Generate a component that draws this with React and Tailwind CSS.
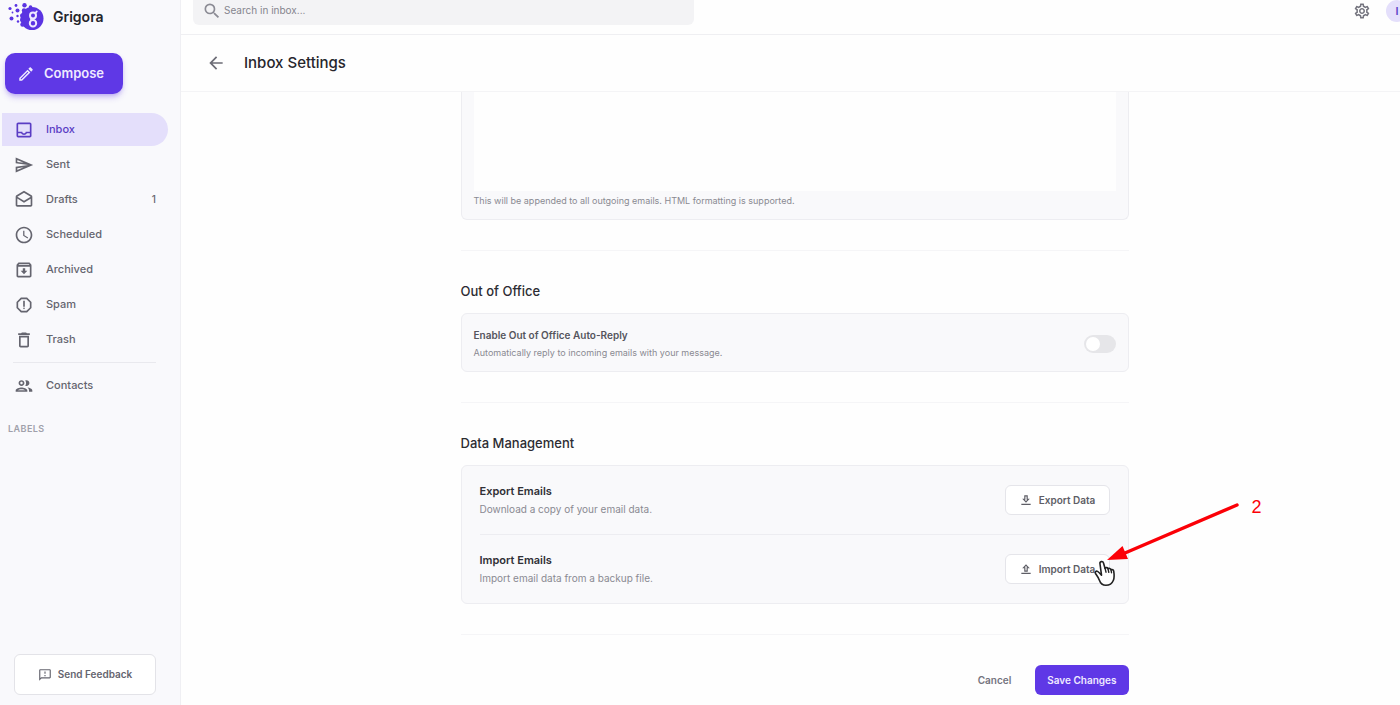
import { useState } from 'react'
import {
  MdArrowBack, MdDeleteOutline, MdOutlineArchive, MdOutlineDrafts, MdOutlineEdit,
  MdOutlineFeedback, MdOutlineGroup, MdOutlineInbox, MdOutlineReport, MdOutlineSend,
  MdOutlineSettings, MdSchedule, MdSearch
} from 'react-icons/md'

const folders = [
  { name: 'Inbox', icon: MdOutlineInbox },
  { name: 'Sent', icon: MdOutlineSend },
  { name: 'Drafts', icon: MdOutlineDrafts, count: 1 },
  { name: 'Scheduled', icon: MdSchedule },
  { name: 'Archived', icon: MdOutlineArchive },
  { name: 'Spam', icon: MdOutlineReport },
  { name: 'Trash', icon: MdDeleteOutline },
]

function Logo() {
  return (
    <svg width="36" height="28" viewBox="0 0 36 28" fill="#5b34e2" aria-hidden="true">
      <circle cx="24" cy="15.5" r="11.5" />
      <circle cx="16.5" cy="2.2" r="2.2" />
      <circle cx="8" cy="2.5" r="1.4" />
      <circle cx="2" cy="5.5" r="1.6" />
      <circle cx="9.5" cy="7.5" r="2" />
      <circle cx="4.5" cy="9.5" r="0.9" />
      <circle cx="16" cy="7.5" r="2.2" />
      <circle cx="22.5" cy="4" r="1.8" />
      <circle cx="3.5" cy="15.5" r="2" />
      <circle cx="9.5" cy="13" r="1.2" />
      <circle cx="14" cy="12.5" r="2" />
      <circle cx="10" cy="18.5" r="1.2" />
      <circle cx="14" cy="17" r="2" />
      <circle cx="14.5" cy="21.5" r="2.2" />
      <g fill="none" stroke="#eee9ff" strokeWidth="2" strokeLinecap="round">
        <circle cx="25" cy="12.5" r="3" />
        <circle cx="25" cy="20.3" r="3.2" />
        <path d="M27.5 10l1.2-1.5M23.5 15.4c-1 1 0 1.6 1.5 1.7" />
      </g>
    </svg>
  )
}

function TransferIcon({ d }) {
  return (
    <svg width="14" height="14" viewBox="0 0 24 24" fill="currentColor" aria-hidden="true">
      <path d={d} />
    </svg>
  )
}

const exportPath = 'M18.5 10H15V4H9v6H5.5l6.5 6.5zM11 11.5V6h2v5.5h1.2L12 13.7 9.8 11.5zM4 18.5h16v2H4z'
const importPath = 'M5.5 10.5H9v6h6v-6h3.5L12 4zM13 9v5.5h-2V9H9.8L12 6.8 14.2 9zM4 18.5h16v2H4z'

function NavItem({ icon: Icon, name, count, active, onClick }) {
  return (
    <button
      onClick={onClick}
      className={`flex h-[33px] w-full items-center rounded-r-full px-3 text-[11px] font-medium ${active ? 'bg-[#e4dffb] text-[#5a3dc4]' : 'text-[#65656f]'}`}
    >
      <Icon size={20} />
      <span className="ml-3">{name}</span>
      {count && <span className="ml-auto text-[10px]">{count}</span>}
    </button>
  )
}

function Sidebar() {
  const [current, setCurrent] = useState('Inbox')
  return (
    <aside className="flex w-[181px] shrink-0 flex-col border-r border-[#efeff3] bg-[#f9f9fc]">
      <div className="flex items-center gap-[9px] pl-2 pt-[3px]">
        <Logo />
        <span className="text-sm font-semibold text-[#24242a]">Grigora</span>
      </div>
      <button className="ml-[5px] mt-[22px] flex h-[41px] w-[118px] items-center gap-[9px] rounded-[10px] bg-[#5f38e6] pl-3 text-[13px] font-semibold text-[#efeaff] shadow-md shadow-[#5f38e6]/30">
        <MdOutlineEdit size={18} />
        Compose
      </button>
      <nav className="mt-[19px] flex flex-col gap-[2px] pl-[2px] pr-3">
        {folders.map(f => (
          <NavItem key={f.name} {...f} active={current === f.name} onClick={() => setCurrent(f.name)} />
        ))}
        <hr className="mt-1 mb-1 ml-[11px] mr-3 border-[#e9e9ee]" />
        <NavItem icon={MdOutlineGroup} name="Contacts" active={current === 'Contacts'} onClick={() => setCurrent('Contacts')} />
      </nav>
      <h2 className="pl-2 pt-5 text-[9px] font-semibold tracking-wider text-[#a0a0aa]">LABELS</h2>
      <div className="mt-auto pr-6 pb-[10px] pl-[14px]">
        <button className="flex h-[41px] w-full items-center justify-center gap-[6px] rounded-md border border-[#e3e3e8] bg-white text-[10px] font-semibold text-[#65656f]">
          <MdOutlineFeedback size={14} />
          Send Feedback
        </button>
      </div>
    </aside>
  )
}

function TopBar() {
  return (
    <header className="flex h-[35px] items-start justify-between border-b border-[#efeff2] pl-3">
      <label className="flex h-[25px] w-[501px] items-center gap-[2px] rounded-b-md bg-[#f3f3f5] pb-1 pl-[9px]">
        <MdSearch size={20} className="shrink-0 text-[#8b8b94]" />
        <input
          type="text"
          aria-label="Search in inbox"
          placeholder="Search in inbox..."
          className="w-full bg-transparent text-[10px] outline-none placeholder:text-[#85858e]"
        />
      </label>
      <div className="flex items-center overflow-hidden">
        <button aria-label="Settings" className="mr-[15px] text-[#74747e]">
          <MdOutlineSettings size={18} />
        </button>
        <button className="-mr-2 h-[22px] w-[22px] rounded-full bg-[#e4dffb] text-[11px] font-semibold text-[#5f45c8]">I</button>
      </div>
    </header>
  )
}

function DataRow({ title, text, children }) {
  return (
    <div className="flex items-center justify-between py-4">
      <div>
        <h3 className="text-[11px] leading-[18px] font-semibold text-[#303036]">{title}</h3>
        <p className="text-[10px] leading-[18px] text-[#8a8a92]">{text}</p>
      </div>
      {children}
    </div>
  )
}

const dataButton = 'flex h-[30px] w-[105px] items-center justify-center gap-[6px] rounded-md border border-[#e5e5ea] bg-white text-[10px] font-semibold text-[#5e5e66]'

// red arrow with its step number, plus the hand cursor over the button
function Pointer() {
  return (
    <div className="pointer-events-none absolute -top-[55px] left-[88px] h-[90px] w-[180px]">
      <svg width="180" height="90" viewBox="0 0 180 90" className="absolute inset-0" aria-hidden="true">
        <path d="M144 6L32 54" stroke="#fb0007" strokeWidth="3.4" strokeLinecap="round" />
        <path d="M14 61L29.5 47L35 60Z" fill="#fb0007" />
        <path
          d="M7 65c-.6-2.6 2.8-3.4 3.5-1l1.5 5.2c1-1 2.8-.7 3 .6c1-.8 2.7-.4 3 .9c1.2-.6 2.5.1 2.7 1.5c.5 3 .8 6.5-.3 9c-1.5 3.7-4 5-7.5 5c-3.5 0-5.5-2-6.5-5c-.8-2.3-2.3-4.3-3.8-6.5c-1-1.5.3-3.2 2-2.3c1.3.7 2.4 2 3.9 3.8z"
          fill="#fff" stroke="#222" strokeWidth="1.6" strokeLinejoin="round"
        />
        <path d="M12 69.2l1 4M15 69.8l.8 3.6M18 70.7l.5 3" stroke="#222" strokeWidth="1.4" strokeLinecap="round" />
      </svg>
      <span className="absolute top-0 left-[159px] font-['Liberation_Sans',sans-serif] text-lg leading-4 text-[#fb0007]">2</span>
    </div>
  )
}

export default function App() {
  const [signature, setSignature] = useState('')
  const [autoReply, setAutoReply] = useState(false)

  return (
    <div className="flex min-h-screen bg-[#fefefe] font-['Inter',sans-serif]">
      <Sidebar />
      <main className="min-w-0 flex-1">
        <TopBar />
        <div className="flex h-[57px] items-center gap-[18px] border-b border-[#f4f4f6] pl-[25px]">
          <button aria-label="Back" className="text-[#6c6c76]">
            <MdArrowBack size={20} />
          </button>
          <h1 className="text-[15px] font-medium text-[#26262c]">Inbox Settings</h1>
        </div>

        <div className="pl-2">
          <div className="mx-auto max-w-[668px]">
            <section className="rounded-b-md border border-t-0 border-[#ededf1] bg-[#f9f9fb] px-3 pb-[9px]">
              <textarea
                id="signature"
                aria-label="Signature"
                value={signature}
                onChange={e => setSignature(e.target.value)}
                className="block h-[99px] w-full resize-none bg-[#fefefe] outline-none"
              />
              <p className="pt-[1px] text-[9px] leading-[18px] text-[#8a8a92]">
                This will be appended to all outgoing emails. HTML formatting is supported.
              </p>
            </section>

            <hr className="my-[30px] border-[#f5f5f7]" />

            <h2 className="text-[13px] leading-5 font-medium text-[#2c2c32]">Out of Office</h2>
            <section className="mt-3 flex items-center justify-between rounded-md border border-[#ededf1] bg-[#f9f9fb] px-3 pt-3 pb-[9px]">
              <div>
                <label htmlFor="auto-reply" className="block text-[10px] leading-[18px] font-semibold text-[#55555d]">
                  Enable Out of Office Auto-Reply
                </label>
                <p className="text-[9px] leading-[18px] text-[#8a8a92]">Automatically reply to incoming emails with your message.</p>
              </div>
              <input
                id="auto-reply"
                type="checkbox"
                role="switch"
                checked={autoReply}
                onChange={e => setAutoReply(e.target.checked)}
                className="h-[18px] w-8 appearance-none rounded-full bg-[#e6e6e9] p-[2px] before:block before:size-[14px] before:rounded-full before:bg-white checked:bg-[#5f38e6] checked:before:ml-auto"
              />
            </section>

            <hr className="my-[30px] border-[#f5f5f7]" />

            <h2 className="text-[13px] leading-5 font-medium text-[#2c2c32]">Data Management</h2>
            <section className="mt-3 divide-y divide-[#ededf1] rounded-md border border-[#ededf1] bg-[#f9f9fb] px-[18px]">
              <DataRow title="Export Emails" text="Download a copy of your email data.">
                <button className={dataButton}>
                  <TransferIcon d={exportPath} />
                  Export Data
                </button>
              </DataRow>
              <DataRow title="Import Emails" text="Import email data from a backup file.">
                <div className="relative">
                  <button className={dataButton}>
                    <TransferIcon d={importPath} />
                    Import Data
                  </button>
                  <Pointer />
                </div>
              </DataRow>
            </section>

            <hr className="my-[30px] border-[#f5f5f7]" />

            <div className="flex justify-end gap-3 pb-[10px]">
              <button className="h-[30px] px-3 text-[10px] font-semibold text-[#74747e]">Cancel</button>
              <button className="h-[30px] rounded-md bg-[#5f38e6] px-3 text-[10px] font-semibold text-[#efeaff]">Save Changes</button>
            </div>
          </div>
        </div>
      </main>
    </div>
  )
}
